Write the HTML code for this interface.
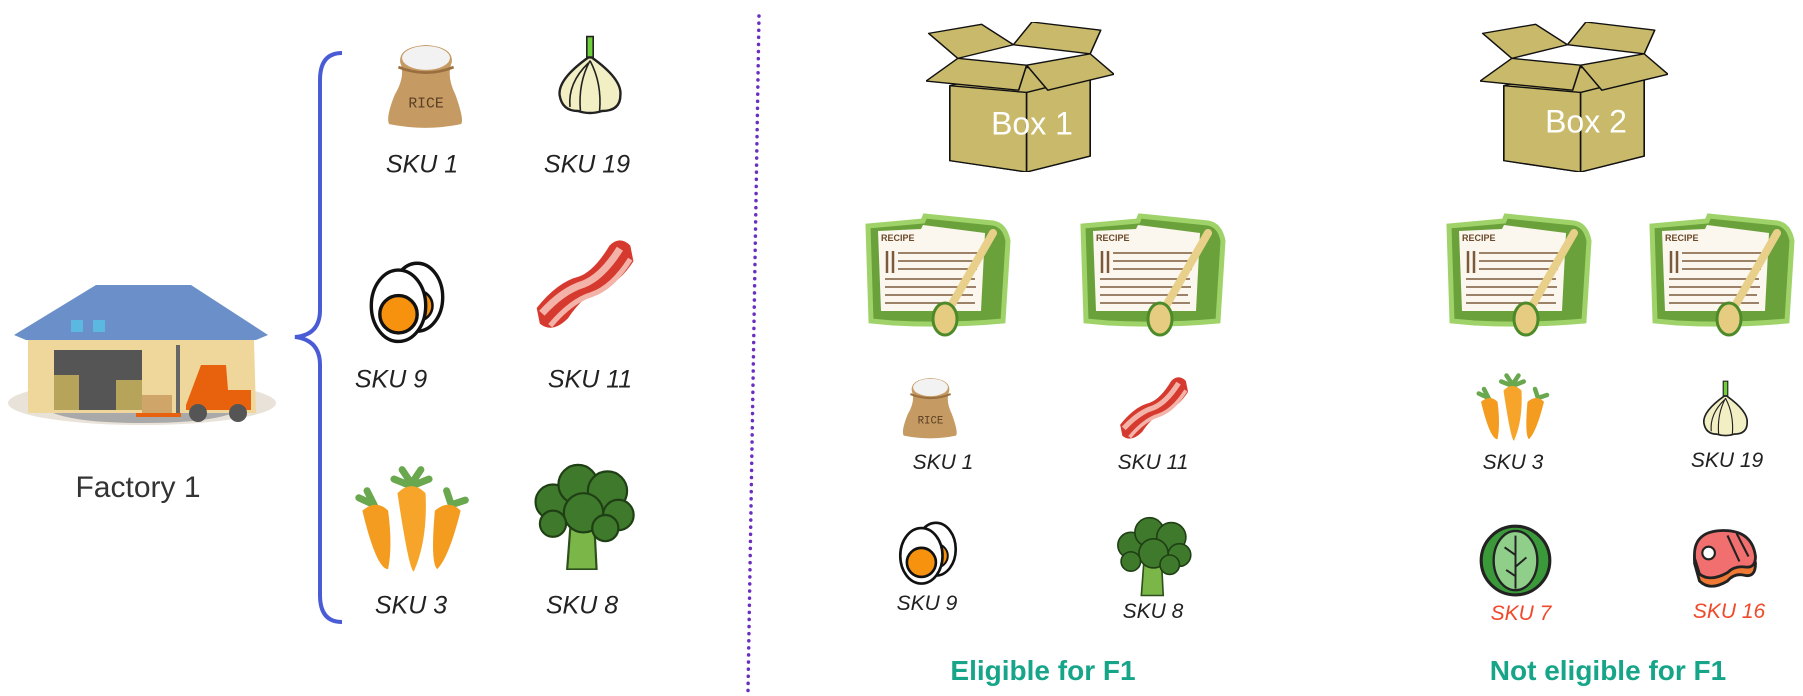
<!DOCTYPE html>
<html><head><meta charset="utf-8"><style>
body{margin:0;width:1803px;height:696px;background:#fff;position:relative;overflow:hidden;font-family:"Liberation Sans",sans-serif}
svg.i{position:absolute}
.t{position:absolute;transform:translate(-50%,-50%);white-space:nowrap;font-style:italic;color:#222}
.L{font-size:25px}.S{font-size:21px}
.red{color:#f04a2a}
.g{position:absolute;transform:translate(-50%,-50%);font-weight:bold;color:#17a589;font-size:28px;white-space:nowrap}
</style></head><body>
<svg width="0" height="0" style="position:absolute">
<defs>
<symbol id="rice" viewBox="0 0 100 100"><path d="M22 25 Q20 8 50 6 Q80 8 78 25 Q72 40 82 60 Q92 88 88 92 Q50 100 10 92 Q6 85 16 60 Q28 40 22 25Z" fill="#c59a63"/><ellipse cx="50" cy="20" rx="26" ry="13" fill="#f2f2f2"/><path d="M20 30 Q50 42 80 30" stroke="#9a6f3f" stroke-width="3" fill="none"/><text x="50" y="74" font-family="Liberation Mono,monospace" font-size="16" text-anchor="middle" fill="#5a3f25">RICE</text></symbol>
<symbol id="garlic" viewBox="0 0 100 100"><path d="M46 2 L54 2 L54 30 L46 30Z" fill="#6ecf3a" stroke="#222" stroke-width="2"/><path d="M48 28 Q10 55 12 75 Q15 95 35 95 Q50 100 65 95 Q88 95 88 75 Q90 55 52 28Z" fill="#f3efc4" stroke="#222" stroke-width="3"/><path d="M50 32 Q35 60 38 95 M50 32 Q65 60 62 95 M48 35 Q22 60 25 90" stroke="#222" stroke-width="2" fill="none"/></symbol>
<symbol id="egg" viewBox="0 0 100 100"><ellipse cx="62" cy="45" rx="30" ry="40" fill="#fff" stroke="#111" stroke-width="4"/><circle cx="62" cy="55" r="18" fill="#f7920f" stroke="#111" stroke-width="3"/><ellipse cx="40" cy="55" rx="32" ry="42" fill="#fff" stroke="#111" stroke-width="4"/><circle cx="40" cy="65" r="22" fill="#f7920f" stroke="#111" stroke-width="4"/></symbol>
<symbol id="bacon" viewBox="0 0 100 100"><path d="M5 75 Q25 50 45 45 Q60 40 75 15 Q85 5 95 15 L98 30 Q85 50 70 55 Q50 62 35 85 Q20 100 8 90Z" fill="#d63a2f"/><path d="M10 80 Q30 58 50 52 Q68 45 85 18" stroke="#f3b3a8" stroke-width="7" fill="none"/><path d="M18 92 Q38 68 58 62 Q78 55 95 28" stroke="#f3b3a8" stroke-width="5" fill="none"/></symbol>
<symbol id="carrot" viewBox="0 0 100 100"><path d="M42 10 L50 22 L58 10 M35 18 L50 24 L65 18 M5 34 L18 40 L12 28 M80 28 L84 40 L96 36" stroke="#6aa84f" stroke-width="6" fill="none" stroke-linecap="round"/><path d="M8 45 Q20 35 30 45 Q34 75 30 95 Q20 95 8 45Z" fill="#f39c1f"/><path d="M70 45 Q82 35 92 45 Q82 85 72 95 Q66 90 70 45Z" fill="#f39c1f"/><path d="M38 30 Q50 18 62 30 Q64 70 52 97 Q48 97 38 30Z" fill="#f7a52a"/></symbol>
<symbol id="broc" viewBox="0 0 100 100"><path d="M38 60 L35 100 L62 100 L60 60Z" fill="#7ab648" stroke="#2d4f1c" stroke-width="2"/><g fill="#3f7a2c" stroke="#1f3f14" stroke-width="2"><circle cx="22" cy="38" r="16"/><circle cx="45" cy="22" r="18"/><circle cx="72" cy="28" r="18"/><circle cx="82" cy="50" r="14"/><circle cx="50" cy="48" r="18"/><circle cx="22" cy="58" r="12"/><circle cx="70" cy="62" r="12"/></g></symbol>
<symbol id="cab" viewBox="0 0 100 100"><circle cx="50" cy="52" r="44" fill="#3a9a3a" stroke="#222" stroke-width="4"/><ellipse cx="50" cy="52" rx="28" ry="38" fill="#8fcf8a" stroke="#222" stroke-width="3"/><path d="M50 20 L50 88 M50 45 L36 35 M50 60 L64 48 M50 72 L38 64" stroke="#222" stroke-width="2.5" fill="none"/></symbol>
<symbol id="steak" viewBox="0 0 100 100"><path d="M8 55 Q5 15 45 12 Q90 10 95 55 Q95 75 80 72 Q65 68 55 80 Q30 95 15 80Z" fill="#f07a34" stroke="#222" stroke-width="4"/><path d="M8 48 Q5 10 45 8 Q90 6 95 45 Q95 62 80 60 Q65 58 55 68 Q30 82 15 70Z" fill="#f26f6f" stroke="#222" stroke-width="4"/><circle cx="28" cy="40" r="9" fill="#fff" stroke="#222" stroke-width="3"/><path d="M55 15 L72 52 M68 12 L85 45" stroke="#222" stroke-width="3"/></symbol>
<symbol id="recipe" viewBox="0 0 150 130"><path d="M5 15 L60 10 L62 5 L130 12 Q142 14 145 30 L140 110 Q85 115 30 112 L8 110Z" fill="#6aa13a" stroke="#9fd36a" stroke-width="5"/><path d="M15 20 L58 18 L60 14 L122 22 L118 100 L18 100Z" fill="#fbf6ee"/><text x="18" y="30" font-family="Liberation Sans,sans-serif" font-size="9" font-weight="bold" fill="#6b4a2a">RECIPE</text><g stroke="#7a5a3a" stroke-width="1.5"><path d="M35 42 H115 M35 50 H112 M35 58 H114 M22 68 H112 M22 76 H113 M22 84 H110 M22 92 H112"/><path d="M24 40 V62 M30 40 V62" stroke-width="2.5"/></g><path d="M130 22 L85 100" stroke="#e8d08a" stroke-width="8" stroke-linecap="round"/><ellipse cx="82" cy="108" rx="12" ry="16" fill="#e6cc80" stroke="#4d8a2a" stroke-width="3"/></symbol>
<symbol id="box" viewBox="0 0 355 330"><g fill="#c9b96a" stroke="#111" stroke-width="3" stroke-linejoin="round"><polygon points="5,25 105,5 165,50 60,80"/><polygon points="165,50 200,0 330,18 310,70"/><polygon points="45,140 190,100 310,120 310,295 190,330 45,305"/><polygon points="45,140 190,155 190,330 45,305"/><polygon points="190,155 310,120 310,295 190,330"/><polygon points="0,130 60,80 190,95 175,150"/><polygon points="190,95 310,70 355,115 230,150"/></g></symbol>
</defs></svg>

<!-- warehouse -->
<svg class="i" style="left:6px;top:285px" width="272" height="142" viewBox="0 0 272 142"><ellipse cx="136" cy="118" rx="134" ry="22" fill="#e8e2d8"/><path d="M30 110 Q30 138 136 138 Q245 138 245 110Z" fill="#a9a9a9"/><polygon points="22,55 130,55 248,55 250,128 22,128" fill="#efd79c"/><polygon points="8,50 90,0 185,0 262,50 250,55 20,55" fill="#6b8fc9"/><rect x="65" y="35" width="12" height="12" fill="#5bb8e0"/><rect x="87" y="35" width="12" height="12" fill="#5bb8e0"/><rect x="48" y="65" width="88" height="60" fill="#555"/><rect x="48" y="90" width="25" height="35" fill="#b5a45a"/><rect x="110" y="95" width="26" height="30" fill="#b5a45a"/><rect x="136" y="110" width="30" height="20" fill="#d0a56a"/><rect x="170" y="60" width="4" height="70" fill="#666"/><path d="M180 120 L195 80 L220 80 L222 105 L245 105 L245 125 L180 125Z" fill="#e8610c"/><circle cx="192" cy="128" r="9" fill="#555"/><circle cx="232" cy="128" r="9" fill="#555"/><rect x="130" y="128" width="45" height="4" fill="#e8610c"/></svg>
<div class="t" style="left:138px;top:488px;font-style:normal;font-size:30px;color:#333">Factory 1</div>

<!-- brace -->
<svg class="i" style="left:290px;top:50px" width="60" height="575" viewBox="0 0 60 575"><path d="M52 3 Q30 3 30 30 L30 260 Q30 285 5 287 Q30 290 30 315 L30 545 Q30 572 52 572" stroke="#4a5bd6" stroke-width="4" fill="none"/></svg>

<svg class="i" style="left:380px;top:38px" width="92" height="95"><use href="#rice"/></svg>
<svg class="i" style="left:550px;top:21px" width="80" height="108"><use href="#garlic"/></svg>
<svg class="i" style="left:362px;top:259px" width="90" height="85"><use href="#egg"/></svg>
<svg class="i" style="left:531px;top:230px" width="105" height="104"><use href="#bacon"/></svg>
<svg class="i" style="left:348px;top:458px" width="127" height="117"><use href="#carrot"/></svg>
<svg class="i" style="left:529px;top:460px" width="109" height="110"><use href="#broc"/></svg>
<div class="t L" style="left:422px;top:165px">SKU 1</div>
<div class="t L" style="left:587px;top:165px">SKU 19</div>
<div class="t L" style="left:391px;top:380px">SKU 9</div>
<div class="t L" style="left:590px;top:380px">SKU 11</div>
<div class="t L" style="left:411px;top:606px">SKU 3</div>
<div class="t L" style="left:582px;top:606px">SKU 8</div>

<!-- dotted divider -->
<svg class="i" style="left:740px;top:10px" width="30" height="686"><line x1="19" y1="6" x2="8" y2="682" stroke="#6a2fc0" stroke-width="3.5" stroke-dasharray="0.1 7" stroke-linecap="round"/></svg>

<!-- boxes -->
<svg class="i" style="left:926px;top:22px" width="188" height="150" preserveAspectRatio="none" viewBox="0 0 355 330"><use href="#box"/></svg>
<svg class="i" style="left:1480px;top:22px" width="188" height="150" preserveAspectRatio="none" viewBox="0 0 355 330"><use href="#box"/></svg>
<div class="t" style="left:1032px;top:124px;font-style:normal;color:#fff;font-size:32px">Box 1</div>
<div class="t" style="left:1586px;top:122px;font-style:normal;color:#fff;font-size:32px">Box 2</div>

<svg class="i" style="left:863px;top:211px" width="150" height="130"><use href="#recipe"/></svg>
<svg class="i" style="left:1078px;top:211px" width="150" height="130"><use href="#recipe"/></svg>
<svg class="i" style="left:1444px;top:211px" width="150" height="130"><use href="#recipe"/></svg>
<svg class="i" style="left:1647px;top:211px" width="150" height="130"><use href="#recipe"/></svg>

<svg class="i" style="left:897px;top:372px" width="67" height="71"><use href="#rice"/></svg>
<svg class="i" style="left:1116px;top:370px" width="74" height="73"><use href="#bacon"/></svg>
<svg class="i" style="left:1472px;top:368px" width="81" height="75"><use href="#carrot"/></svg>
<svg class="i" style="left:1697px;top:374px" width="57" height="69"><use href="#garlic"/></svg>
<div class="t S" style="left:943px;top:463px">SKU 1</div>
<div class="t S" style="left:1153px;top:463px">SKU 11</div>
<div class="t S" style="left:1513px;top:463px">SKU 3</div>
<div class="t S" style="left:1727px;top:461px">SKU 19</div>

<svg class="i" style="left:895px;top:515px" width="66" height="75"><use href="#egg"/></svg>
<svg class="i" style="left:1113px;top:512px" width="81" height="86"><use href="#broc"/></svg>
<svg class="i" style="left:1476px;top:520px" width="79" height="78"><use href="#cab"/></svg>
<svg class="i" style="left:1679px;top:525px" width="90" height="70"><use href="#steak"/></svg>
<div class="t S" style="left:927px;top:604px">SKU 9</div>
<div class="t S" style="left:1153px;top:612px">SKU 8</div>
<div class="t S red" style="left:1521px;top:614px">SKU 7</div>
<div class="t S red" style="left:1729px;top:612px">SKU 16</div>

<div class="g" style="left:1043px;top:671px">Eligible for F1</div>
<div class="g" style="left:1608px;top:671px">Not eligible for F1</div>
</body></html>
